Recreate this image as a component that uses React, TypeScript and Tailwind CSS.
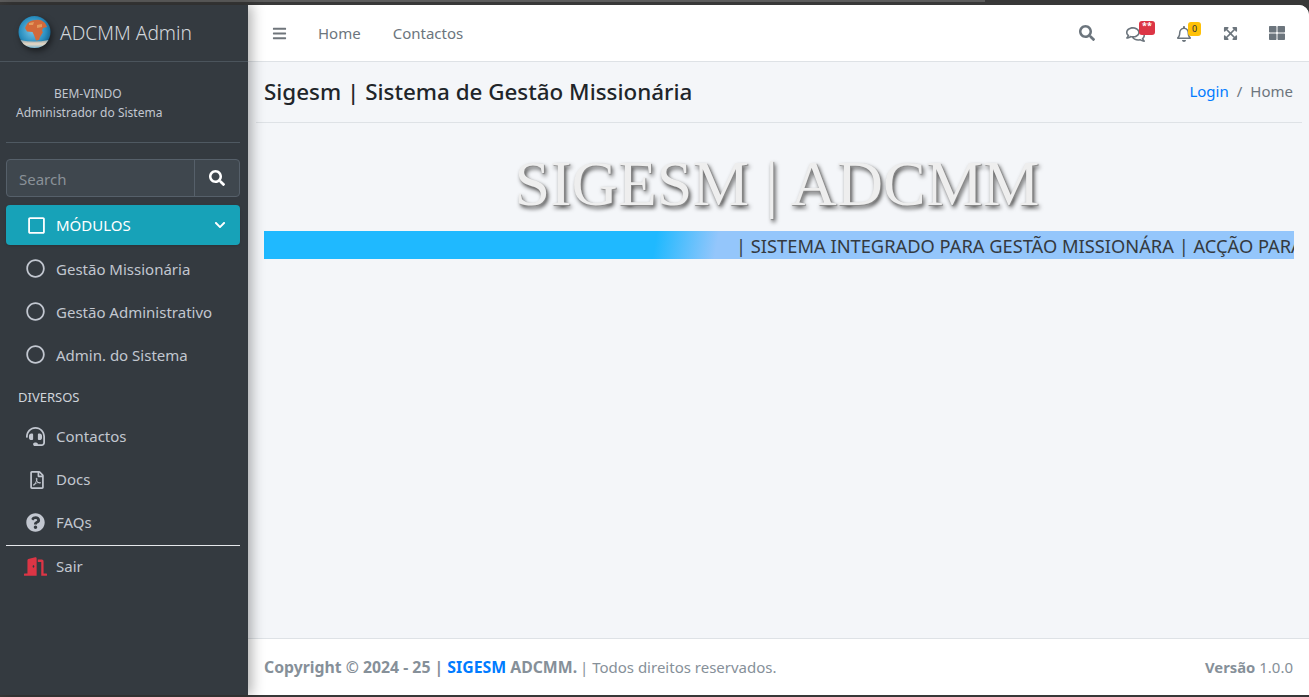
import { FaSearch, FaRegComments, FaRegBell, FaExpandArrowsAlt, FaThLarge, FaBars, FaHeadset, FaRegFilePdf, FaQuestionCircle, FaDoorOpen, FaRegCircle, FaRegSquare, FaChevronDown } from "react-icons/fa";

const ff = "[font-family:'Noto_Sans','Open_Sans',sans-serif]";

function Globe() {
  return (
    <svg width="34" height="36" viewBox="0 0 34 36" className="drop-shadow-[2px_3px_3px_rgba(0,0,0,0.5)]">
      <defs>
        <radialGradient id="g" cx="0.45" cy="0.45" r="0.62">
          <stop offset="0" stopColor="#7cc6e6" />
          <stop offset="0.65" stopColor="#2a8fc0" />
          <stop offset="1" stopColor="#125a86" />
        </radialGradient>
        <linearGradient id="b" x1="0" y1="0" x2="0" y2="1">
          <stop offset="0" stopColor="#8fa6ad" />
          <stop offset="0.5" stopColor="#e8d8c4" />
          <stop offset="1" stopColor="#7fb6cf" />
        </linearGradient>
      </defs>
      <circle cx="16.5" cy="17" r="16" fill="url(#g)" />
      <path d="M9 9 Q12 5 18 5 Q23 4 27 8 L29 12 L25 13 L24 16 L25 17 L22 22 L21 25 L18 25.5 L16 20 L14.5 17 L9 16.5 L7 13 Z" fill="#d2693a" />
      <path d="M11 8 L16 7 L15 10 L11 10Z M19 10 L24 9 L24 12 L19 13Z" fill="#e39a5c" />
      <path d="M2.5 25 Q16 28 30.5 25 Q26 33 16.5 33 Q7 33 2.5 25Z" fill="url(#b)" />
    </svg>
  );
}

function NavItem({ icon, label, low }: { icon: React.ReactNode; label: string; low?: boolean }) {
  return (
    <div className="h-[43px] flex items-center pl-[26px] text-[#c2c7d0] text-[15px] shrink-0">
      <span className="w-[30px] flex shrink-0">{icon}</span>
      <span className={low ? "relative top-[1px]" : ""}>{label}</span>
    </div>
  );
}

export default function App() {
  return (
    <div className={`h-[697px] w-[1309px] overflow-hidden bg-[#383838] pb-[2px] flex flex-col ${ff}`}>
      <div className="h-[5px] shrink-0">
        <div className="h-[2px] w-[985px] bg-[#5c5c5c]" />
      </div>
      <div className="flex-1 min-h-0 flex">
        <aside className="w-[248px] shrink-0 bg-[#343a40] flex flex-col shadow-[4px_0_12px_rgba(0,0,0,0.3)] z-10">
          <div className="h-[57px] shrink-0 border-b border-[#4b545c] flex items-center pl-[18px] gap-[8px]">
            <Globe />
            <span className="text-[19.2px] text-[#d3d7dc] font-light">ADCMM Admin</span>
          </div>
          <div className="ml-[6px] mr-[8px] h-[81px] shrink-0 border-b border-[#4f5962] pt-[22px] text-[#c2c7d0] text-[12px] leading-[19px]">
            <div className="pl-[48px]">BEM-VINDO</div>
            <div className="pl-[10px]">Administrador do Sistema</div>
          </div>
          <div className="ml-[6px] mr-[8px] mt-[16px] h-[38px] shrink-0 flex rounded-[4px] border border-[#56606a] bg-[#3f474e] overflow-hidden">
            <div className="flex-1 pl-[12px] pt-[2px] flex items-center text-[15px] text-[#8a9198]">Search</div>
            <div className="w-[45px] border-l border-[#56606a] flex items-center justify-center text-white">
              <FaSearch size={16} />
            </div>
          </div>
          <div className="ml-[6px] mr-[8px] mt-[8px] h-[40px] shrink-0 rounded-[4px] bg-[#17a2b8] flex items-center pl-[21px] pr-[14px] text-white text-[15px] shadow-sm">
            <span className="w-[29px] flex"><FaRegSquare size={19} /></span>
            <span className="flex-1">MÓDULOS</span>
            <FaChevronDown size={12} />
          </div>
          <div className="mt-[2px] flex flex-col">
            <NavItem low icon={<FaRegCircle size={19} />} label="Gestão Missionária" />
            <NavItem low icon={<FaRegCircle size={19} />} label="Gestão Administrativo" />
            <NavItem low icon={<FaRegCircle size={19} />} label="Admin. do Sistema" />
          </div>
          <div className="pl-[18px] h-[39px] pt-[4px] flex items-center text-[#d0d4db] text-[13px] shrink-0">DIVERSOS</div>
          <div className="flex flex-col mb-[1px]">
            <NavItem icon={<FaHeadset size={19} />} label="Contactos" />
            <NavItem icon={<FaRegFilePdf size={18} className="ml-[2px]" />} label="Docs" />
            <NavItem icon={<FaQuestionCircle size={19} />} label="FAQs" />
          </div>
          <div className="ml-[6px] mr-[8px] border-t border-[#e5e7eb]" />
          <div className="h-[41px] flex items-center pl-[24px] text-[#c2c7d0] text-[15px] shrink-0">
            <span className="w-[32px] flex text-[#dc3545]"><FaDoorOpen size={23} /></span>
            <span>Sair</span>
          </div>
        </aside>
        <div className="flex-1 min-w-0 flex flex-col rounded-tr-[10px] overflow-hidden bg-[#f4f6f9]">
          <header className="h-[57px] shrink-0 bg-white border-b border-[#dee2e6] flex items-center text-[15px] text-[#6c757d]">
            <FaBars size={15} className="ml-[24px] text-[#6f757b]" />
            <span className="ml-[31px]">Home</span>
            <span className="ml-[32px]">Contactos</span>
            <div className="ml-auto flex items-center text-[#6c757d] pr-[24px]">
              <FaSearch size={16} />
              <div className="relative ml-[31px] top-[1px]">
                <FaRegComments size={19} />
                <span className="absolute -top-[4px] left-[13px] w-[16px] h-[14px] rounded-[3px] bg-[#dc3545] text-white text-[9px] leading-[10px] font-bold text-center">**</span>
              </div>
              <div className="relative ml-[31px] top-[1px]">
                <FaRegBell size={16} />
                <span className="absolute -top-[4px] left-[12px] w-[13px] h-[14px] rounded-[3px] bg-[#ffc107] text-[#1f2d3d] text-[9px] leading-[14px] text-center">0</span>
              </div>
              <FaExpandArrowsAlt size={15} className="ml-[31px]" />
              <FaThLarge size={16} className="ml-[31px]" />
            </div>
          </header>
          <main className="flex-1 min-h-0 flex flex-col pl-[8px] pr-[7px]">
            <div className="h-[61px] shrink-0 border-b border-[#dee2e6] flex items-center justify-between pl-[8px] pr-[9px]">
              <h1 className="text-[22.4px] font-medium text-[#212529]">Sigesm | Sistema de Gestão Missionária</h1>
              <div className="text-[15px] text-[#6c757d] pb-[2px]">
                <span className="text-[#007bff]">Login</span>
                <span className="mx-[8px]">/</span>
                <span>Home</span>
              </div>
            </div>
            <div className="ml-[8px] mr-[12px] mt-[24px] text-center [font-family:'Liberation_Serif',serif] text-[64px] leading-[74px] text-[#eeeeee] [text-shadow:1px_1px_1px_#888,2px_3px_4px_#444]">SIGESM | ADCMM</div>
            <div className="mx-[8px] mt-[10px] h-[28px] flex overflow-hidden bg-[linear-gradient(100deg,#1fb9ff_38%,#94c6fb_44%)] text-[18.3px] leading-[30px] text-[#343a40] whitespace-nowrap">
              <span className="ml-[472px]">| SISTEMA INTEGRADO PARA GESTÃO MISSIONÁRA | ACÇÃO PARA</span>
            </div>
          </main>
          <footer className="h-[57px] shrink-0 bg-white border-t border-[#dee2e6] flex items-center justify-between pl-[16px] pr-[16px] pt-[1px] text-[15px] text-[#869099]">
            <div>
              <b className="text-[15.8px]">Copyright © 2024 - 25 | <span className="text-[#007bff]">SIGESM</span> ADCMM.</b>
              <span className="ml-[-1px]"> | Todos direitos reservados.</span>
            </div>
            <div><b className="text-[14.8px]">Versão</b> 1.0.0</div>
          </footer>
        </div>
      </div>
    </div>
  );
}
